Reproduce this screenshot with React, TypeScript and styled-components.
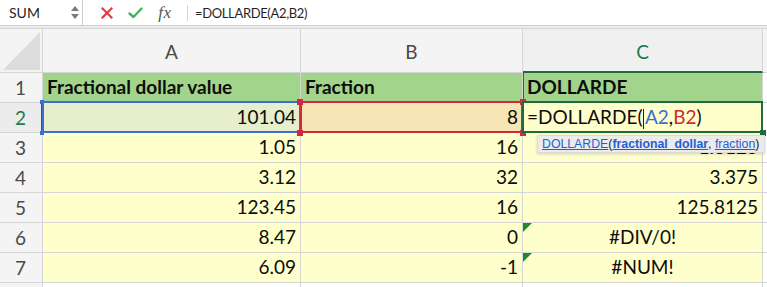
import React from "react";
import styled, { createGlobalStyle } from "styled-components";

const Global = createGlobalStyle`
  html, body { margin: 0; padding: 0; background: #ffffff; }
  body { width: 767px; height: 287px; overflow: hidden; font-family: Lato, "Noto Sans", sans-serif; }
`;

const Page = styled.div`
  width: 767px;
  height: 287px;
  overflow: hidden;
  display: flex;
  flex-direction: column;
`;

const FormulaBar = styled.div`
  height: 25px;
  display: flex;
  align-items: center;
  background: #ffffff;
  border-bottom: 1px solid #cfcfcf;
  flex-shrink: 0;
`;

const NameBox = styled.div`
  width: 83px;
  height: 25px;
  box-sizing: border-box;
  border-right: 1px solid #cdcdcd;
  display: flex;
  align-items: center;
  justify-content: space-between;
  padding: 0 2px 0 9px;
  font-family: Lato, "Noto Sans", sans-serif;
  font-size: 14px;
  color: #1f1f1f;
`;

const Spinner = styled.div`
  display: flex;
  flex-direction: column;
  gap: 3px;
  align-items: center;
  width: 10px;
`;

const Tools = styled.div`
  display: flex;
  align-items: center;
  padding-left: 10px;
  height: 100%;
`;

const ToolIcon = styled.div<{ $w: number }>`
  width: ${(p) => p.$w}px;
  display: flex;
  align-items: center;
  justify-content: center;
`;

const Fx = styled.span`
  font-family: "Liberation Serif", "DejaVu Serif", serif;
  font-style: italic;
  font-size: 17px;
  color: #555;
  letter-spacing: 0.5px;
`;

const Separator = styled.div`
  width: 1px;
  height: 16px;
  background: #d6d6d6;
  margin: 0 7px 0 6px;
`;

const FormulaText = styled.div`
  font-family: Lato, "Noto Sans", sans-serif;
  font-size: 13px;
  letter-spacing: -0.35px;
  color: #1f1f1f;
`;

const Band = styled.div`
  height: 2px;
  background: #ececec;
  flex-shrink: 0;
`;

const Sheet = styled.div`
  display: grid;
  grid-template-columns: 43px 258px 222px 240px 1fr;
  grid-template-rows: 45px;
  grid-auto-rows: 30px;
  flex: 1;
`;

const Cell = styled.div<{
  $bg?: string;
  $align?: "left" | "right" | "center";
  $bold?: boolean;
  $leftLine?: string;
}>`
  position: relative;
  box-sizing: border-box;
  border-right: 1px solid #d5d5d5;
  border-bottom: 1px solid #d5d5d5;
  background: ${(p) => p.$bg || "#ffffff"};
  display: flex;
  align-items: flex-end;
  justify-content: ${(p) =>
    p.$align === "right" ? "flex-end" : p.$align === "center" ? "center" : "flex-start"};
  padding: 0 4px 3px 4px;
  font-family: Lato, "Noto Sans", sans-serif;
  font-size: 19px;
  line-height: 24px;
  font-weight: ${(p) => (p.$bold ? 700 : 400)};
  color: #0d0d0d;
  white-space: nowrap;
  ${(p) => (p.$leftLine ? `box-shadow: inset 1px 0 0 ${p.$leftLine};` : "")}
`;

const Corner = styled.div`
  box-sizing: border-box;
  border-right: 1px solid #d5d5d5;
  border-bottom: 1px solid #d5d5d5;
  border-top: 1px solid #d5d5d5;
  background: #f4f4f4;
  display: flex;
  align-items: flex-end;
  justify-content: flex-end;
  padding: 0 2px 2px 0;
`;

const ColHead = styled.div<{ $active?: boolean }>`
  box-sizing: border-box;
  border-right: 1px solid #d5d5d5;
  border-top: 1px solid #d5d5d5;
  border-bottom: ${(p) => (p.$active ? "2px solid #1d6b3f" : "1px solid #d5d5d5")};
  background: ${(p) => (p.$active ? "#f0f0f0" : "#f4f4f4")};
  display: flex;
  align-items: center;
  justify-content: center;
  padding-top: 2px;
  font-family: Lato, "Noto Sans", sans-serif;
  font-size: 19px;
  color: ${(p) => (p.$active ? "#1d7a44" : "#4a4a4a")};
`;

const RowHead = styled.div<{ $active?: boolean }>`
  box-sizing: border-box;
  border-right: ${(p) => (p.$active ? "2px solid #1d6b3f" : "1px solid #d5d5d5")};
  border-bottom: 1px solid #d5d5d5;
  background: ${(p) => (p.$active ? "#ececec" : "#f4f4f4")};
  display: flex;
  align-items: center;
  justify-content: center;
  padding-right: ${(p) => (p.$active ? "0" : "1px")};
  font-family: Lato, "Noto Sans", sans-serif;
  font-size: 19px;
  color: ${(p) => (p.$active ? "#1d7a44" : "#4a4a4a")};
`;

const Frame = styled.div<{ $color: string }>`
  position: absolute;
  top: -2px;
  left: -1px;
  right: -1px;
  bottom: -1px;
  border: 2px solid ${(p) => p.$color};
  pointer-events: none;
  z-index: 2;
`;

const Handle = styled.div<{ $color: string; $pos: "tl" | "tr" | "bl" | "br"; $size?: number }>`
  position: absolute;
  width: ${(p) => p.$size || 6}px;
  height: ${(p) => p.$size || 6}px;
  background: ${(p) => p.$color};
  ${(p) => (p.$pos[0] === "t" ? "top" : "bottom")}: -${(p) => ((p.$size || 6) / 2 + 1)}px;
  ${(p) => (p.$pos[1] === "l" ? "left" : "right")}: -${(p) => ((p.$size || 6) / 2 + 1)}px;
  z-index: 3;
`;

const ErrorMark = styled.div`
  position: absolute;
  top: 0;
  left: 0;
  width: 0;
  height: 0;
  border-top: 9px solid #1e8c2e;
  border-right: 9px solid transparent;
`;

const Ref = styled.span<{ $color: string }>`
  color: ${(p) => p.$color};
`;

const Caret = styled.span`
  display: inline-block;
  width: 1px;
  height: 20px;
  background: #222;
  vertical-align: -3px;
  margin: 0 0.5px 0 1px;
`;

const Tooltip = styled.div`
  position: absolute;
  top: 32px;
  left: 14px;
  height: 18px;
  box-sizing: border-box;
  padding: 0 5px 0 4px;
  background: #ebebeb;
  border: 1px solid #dcdcdc;
  box-shadow: 0 1px 3px rgba(0, 0, 0, 0.18);
  display: flex;
  align-items: center;
  font-family: "Liberation Sans", Arial, sans-serif;
  font-size: 12.3px;
  font-weight: 400;
  color: #1a1a1a;
  z-index: 5;
  line-height: 16px;
`;

const TipLink = styled.span<{ $bold?: boolean }>`
  color: #1f5fd6;
  text-decoration: underline;
  font-weight: ${(p) => (p.$bold ? 700 : 400)};
`;

const GREEN = "#a2d58b";
const YELLOW = "#ffffcc";

const rows: { a: string; b: string; c: string; cAlign: "right" | "center"; err?: boolean }[] = [
  { a: "1.05", b: "16", c: "1.8125", cAlign: "right" },
  { a: "3.12", b: "32", c: "3.375", cAlign: "right" },
  { a: "123.45", b: "16", c: "125.8125", cAlign: "right" },
  { a: "8.47", b: "0", c: "#DIV/0!", cAlign: "center", err: true },
  { a: "6.09", b: "-1", c: "#NUM!", cAlign: "center", err: true },
];

function Arrow({ up }: { up?: boolean }) {
  return (
    <svg width="8" height="5" viewBox="0 0 8 5">
      <path d={up ? "M4 0 L8 5 L0 5 Z" : "M0 0 L8 0 L4 5 Z"} fill="#7a7a7a" />
    </svg>
  );
}

export default function App() {
  return (
    <Page>
      <Global />
      <FormulaBar>
        <NameBox>
          <span>SUM</span>
          <Spinner>
            <Arrow up />
            <Arrow />
          </Spinner>
        </NameBox>
        <Tools>
          <ToolIcon $w={28}>
            <svg width="12" height="12" viewBox="0 0 12 12">
              <path d="M1.5 1.5 L10.5 10.5 M10.5 1.5 L1.5 10.5" stroke="#e33d3f" strokeWidth="2.2" strokeLinecap="square" />
            </svg>
          </ToolIcon>
          <ToolIcon $w={28}>
            <svg width="15" height="12" viewBox="0 0 15 12">
              <path d="M1.5 6.5 L5.5 10 L13.5 1.5" stroke="#3fb55a" strokeWidth="2.4" fill="none" strokeLinecap="round" strokeLinejoin="round" />
            </svg>
          </ToolIcon>
          <ToolIcon $w={32}>
            <Fx>fx</Fx>
          </ToolIcon>
        </Tools>
        <Separator />
        <FormulaText>=DOLLARDE(A2,B2)</FormulaText>
      </FormulaBar>
      <Band />
      <Sheet>
        <Corner>
          <svg width="37" height="38" viewBox="0 0 37 38">
            <path d="M37 0 L37 38 L0 38 Z" fill="#dcdcdc" />
          </svg>
        </Corner>
        <ColHead>A</ColHead>
        <ColHead>B</ColHead>
        <ColHead $active>C</ColHead>
        <ColHead />

        <RowHead>1</RowHead>
        <Cell $bg={GREEN} $bold>Fractional dollar value</Cell>
        <Cell $bg={GREEN} $bold>Fraction</Cell>
        <Cell $bg={GREEN} $bold $leftLine="#1d6b3f">DOLLARDE</Cell>
        <Cell />

        <RowHead $active>2</RowHead>
        <Cell $bg="#e6eecb" $align="right">
          101.04
          <Frame $color="#3a6ed3" />
          <Handle $color="#3a6ed3" $pos="tl" $size={4} />
          <Handle $color="#3a6ed3" $pos="bl" $size={4} />
        </Cell>
        <Cell $bg="#f8e5b6" $align="right">
          8
          <Frame $color="#d1283b" />
          <Handle $color="#d1283b" $pos="tl" />
          <Handle $color="#d1283b" $pos="bl" />
          <Handle $color="#d1283b" $pos="tr" />
          <Handle $color="#d1283b" $pos="br" />
        </Cell>
        <Cell $bg={YELLOW} style={{ zIndex: 4 }}>
          =DOLLARDE(<Caret />
          <Ref $color="#3a6ed3">A2</Ref>,<Ref $color="#d1283b">B2</Ref>)
          <Frame $color="#1d6b3f" />
          <Handle $color="#1d6b3f" $pos="br" $size={6} />
          <Tooltip>
            <TipLink>DOLLARDE</TipLink>(<TipLink $bold>fractional_dollar</TipLink>,&nbsp;
            <TipLink>fraction</TipLink>)
          </Tooltip>
        </Cell>
        <Cell />

        {rows.map((r, i) => (
          <React.Fragment key={i}>
            <RowHead>{i + 3}</RowHead>
            <Cell $bg={YELLOW} $align="right">{r.a}</Cell>
            <Cell $bg={YELLOW} $align="right">{r.b}</Cell>
            <Cell $bg={YELLOW} $align={r.cAlign}>
              {r.err && <ErrorMark />}
              {r.c}
            </Cell>
            <Cell />
          </React.Fragment>
        ))}
        <RowHead />
        <Cell />
        <Cell />
        <Cell />
        <Cell />
      </Sheet>
    </Page>
  );
}
